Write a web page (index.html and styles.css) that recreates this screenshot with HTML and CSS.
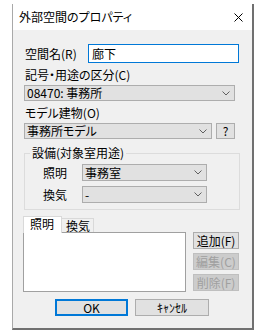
FILE: index.html
```
<!DOCTYPE html>
<html lang="ja">
<head>
<meta charset="utf-8">
<link rel="stylesheet" href="styles.css">
</head>
<body>
<div class="dialog">
  <div class="titlebar">
    <span class="title">外部空間のプロパティ</span>
    <svg class="close" width="9" height="9" viewBox="0 0 9 9"><path d="M0.5 0.5 L8.5 8.5 M8.5 0.5 L0.5 8.5" stroke="#000" stroke-width="1" fill="none"/></svg>
  </div>
  <div class="body">
    <div class="name-row">
      <span class="lbl">空間名(R)</span>
      <div class="input">廊下</div>
    </div>
    <div class="caption">記号・用途の区分(C)</div>
    <div class="combo wide"><span>08470: 事務所</span><svg class="chev" width="8" height="5" viewBox="0 0 8 5"><path d="M0.5 0.5 L4 4 L7.5 0.5" stroke="#606060" fill="none"/></svg></div>
    <div class="caption">モデル建物(O)</div>
    <div class="model-row">
      <div class="combo model"><span>事務所モデル</span><svg class="chev" width="8" height="5" viewBox="0 0 8 5"><path d="M0.5 0.5 L4 4 L7.5 0.5" stroke="#606060" fill="none"/></svg></div>
      <div class="btn qbtn">?</div>
    </div>
    <fieldset class="group">
      <legend>設備(対象室用途)</legend>
      <div class="grow">
        <span class="glbl">照明</span>
        <div class="combo inner"><span>事務室</span><svg class="chev" width="8" height="5" viewBox="0 0 8 5"><path d="M0.5 0.5 L4 4 L7.5 0.5" stroke="#606060" fill="none"/></svg></div>
      </div>
      <div class="grow">
        <span class="glbl">換気</span>
        <div class="combo inner"><span>-</span><svg class="chev" width="8" height="5" viewBox="0 0 8 5"><path d="M0.5 0.5 L4 4 L7.5 0.5" stroke="#606060" fill="none"/></svg></div>
      </div>
    </fieldset>
    <div class="tabs">
      <div class="tab active">照明</div>
      <div class="tab">換気</div>
    </div>
    <div class="panel-row">
      <div class="list"></div>
      <div class="side">
        <div class="btn">追加(F)</div>
        <div class="btn disabled">編集(C)</div>
        <div class="btn disabled">削除(F)</div>
      </div>
    </div>
    <div class="footer">
      <div class="btn ok">OK</div>
      <div class="btn cancel">ｷｬﾝｾﾙ</div>
    </div>
  </div>
</div>
</body>
</html>
```
FILE: styles.css
```
body {
  margin: 0;
  background: #fff;
  font-family: "Noto Sans CJK JP", sans-serif;
  font-size: 12px;
  font-feature-settings: "palt";
  color: #000;
}
.dialog {
  margin: 4px 0 0 12px;
  width: 242px;
  box-sizing: border-box;
  border-left: 1px solid #a9a9a9;
  border-right: 2px solid #707070;
  border-bottom: 2px solid #707070;
  background: #f0f0f0;
}
.titlebar {
  height: 26px;
  background: #fff;
  display: flex;
  align-items: center;
  justify-content: space-between;
  padding: 0 9px 0 6px;
}
.title { line-height: 14px; }
.close { display: block; }
.body {
  padding: 14px 12px 12px 11px;
}
.name-row {
  display: flex;
  align-items: center;
  height: 19px;
}
.lbl {
  width: 64px;
  padding-left: 1px;
  box-sizing: border-box;
}
.input {
  width: 151px;
  height: 19px;
  box-sizing: border-box;
  border: 1px solid #0078d7;
  background: #fff;
  padding-left: 3px;
  line-height: 17px;
}
.caption {
  height: 14px;
  line-height: 14px;
  margin: 5px 0 3px 1px;
}
.combo {
  height: 16px;
  box-sizing: border-box;
  border: 1px solid #adadad;
  background: #e1e1e1;
  display: flex;
  align-items: center;
  justify-content: space-between;
  padding: 0 4px 0 2px;
  line-height: 14px;
}
.chev { display: block; }
.wide { width: 211px; }
.model-row {
  display: flex;
  gap: 4px;
}
.model { width: 188px; }
.btn {
  height: 17px;
  box-sizing: border-box;
  border: 1px solid #adadad;
  background: #e1e1e1;
  text-align: center;
  line-height: 15px;
}
.qbtn {
  width: 19px;
  height: 16px;
  line-height: 14px;
}
.group {
  margin: 7px 0 0;
  padding: 4px 0 6px;
  border: 1px solid #dcdcdc;
  width: 216px;
  box-sizing: border-box;
  min-width: 0;
}
.group legend {
  margin-left: 5px;
  padding: 0 2px;
  height: 14px;
  line-height: 14px;
}
.grow {
  display: flex;
  align-items: center;
  height: 17px;
  padding-left: 18px;
}
.grow + .grow { margin-top: 5px; }
.glbl { width: 39px; }
.inner {
  width: 125px;
  height: 17px;
}
.tabs {
  margin: 6px 0 0 -1px;
  display: flex;
  align-items: flex-start;
  height: 16px;
  position: relative;
  z-index: 1;
}
.tab {
  box-sizing: border-box;
  width: 32px;
  height: 14px;
  margin-top: 2px;
  padding-left: 4px;
  line-height: 14px;
  background: #f0f0f0;
  border: 1px solid #d9d9d9;
  border-left: none;
  border-bottom: none;
}
.tab.active {
  width: 39px;
  height: 17px;
  margin-top: 0;
  padding-left: 6px;
  line-height: 14px;
  background: #fff;
  border: 1px solid #d9d9d9;
  border-bottom: none;
}
.panel-row {
  display: flex;
  margin-left: -1px;
}
.list {
  width: 163px;
  height: 60px;
  box-sizing: border-box;
  border: 1px solid #a0a0a0;
  background: #fff;
}
.side {
  margin-left: 7px;
  width: 46px;
  display: flex;
  flex-direction: column;
  gap: 4px;
}
.disabled {
  background: #cccccc;
  border-color: #bfbfbf;
  color: #a0a0a0;
}
.footer {
  margin-top: 7px;
  display: flex;
  justify-content: center;
  gap: 7px;
}
.ok {
  width: 73px;
  border: 2px solid #0078d7;
  line-height: 13px;
}
.cancel { width: 74px; }
```
